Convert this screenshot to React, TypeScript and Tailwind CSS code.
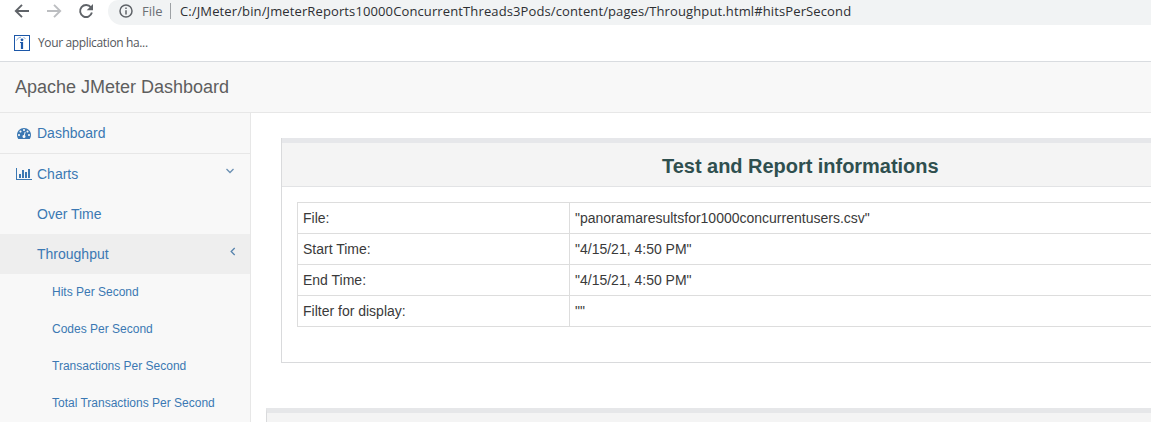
import React from "react";

const blue = "text-[#3b78b3]";

function Tachometer() {
  return (
    <svg className="h-[14px] w-[14px] shrink-0" viewBox="0 0 1792 1792" fill="currentColor">
      <path d="M384 1152q0-53-37.5-90.5t-90.5-37.5-90.5 37.5-37.5 90.5 37.5 90.5 90.5 37.5 90.5-37.5 37.5-90.5zm192-448q0-53-37.5-90.5t-90.5-37.5-90.5 37.5-37.5 90.5 37.5 90.5 90.5 37.5 90.5-37.5 37.5-90.5zm428 481l101-382q6-26-7.5-48.5t-38.5-29.5-48 6.5-30 39.5l-101 382q-60 5-107 43.5t-63 98.5q-20 77 20 146t117 89 146-20 89-117q16-60-6-117t-72-91zm660-33q0-53-37.5-90.5t-90.5-37.5-90.5 37.5-37.5 90.5 37.5 90.5 90.5 37.5 90.5-37.5 37.5-90.5zm-640-640q0-53-37.5-90.5t-90.5-37.5-90.5 37.5-37.5 90.5 37.5 90.5 90.5 37.5 90.5-37.5 37.5-90.5zm448 192q0-53-37.5-90.5t-90.5-37.5-90.5 37.5-37.5 90.5 37.5 90.5 90.5 37.5 90.5-37.5 37.5-90.5zm320 448q0 261-141 483-19 29-54 29h-1402q-35 0-54-29-141-221-141-483 0-182 71-348t191-286 286-191 348-71 348 71 286 191 191 286 71 348z" />
    </svg>
  );
}

function BarChart() {
  return (
    <svg className="h-[14px] w-[16px] shrink-0" viewBox="0 0 2048 1792" fill="currentColor">
      <path d="M640 896v512h-256v-512h256zm384-512v1024h-256v-1024h256zm1024 1152v128h-2048v-1536h128v1408h1920zm-640-896v768h-256v-768h256zm384-384v1152h-256v-1152h256z" />
    </svg>
  );
}

function BrowserBar() {
  return (
    <div className="h-[62px] shrink-0 border-b border-[#d9dce0] bg-white font-['Open_Sans',sans-serif]">
      <div className="flex h-[25px]">
        <svg className="h-[25px] w-[108px] shrink-0" viewBox="0 0 108 25" fill="none" strokeWidth="1.9">
          <path d="M29 11H16.5M22 4.8L15.8 11L22 17.2" stroke="#5f6368" />
          <path d="M47 11h12.5M54 4.8L60.2 11L54 17.2" stroke="#bcbec1" />
          <path d="M90.9 7.4A6 6 0 1 0 91.9 12.6" stroke="#5f6368" />
          <path d="M93 4v6.2h-6.3z" fill="#5f6368" />
        </svg>
        <div className="flex h-[25px] flex-1 items-start overflow-hidden rounded-bl-[14px] rounded-tl-[10px] bg-[#f1f3f4] pl-[11px]">
          <svg className="mt-[4px] h-[14px] w-[14px] shrink-0" viewBox="0 0 14 14" fill="none" stroke="#5f6368" strokeWidth="1.5">
            <circle cx="7" cy="7" r="6" />
            <path d="M7 6.2v4.2M7 3.5v1.5" />
          </svg>
          <span className="ml-[9px] w-[21px] whitespace-nowrap text-[13px] leading-[22px] text-[#6b6f74]">File</span>
          <span className="ml-[7px] mt-[3px] h-[16px] w-px bg-[#9da1a5]" />
          <span className="ml-[9px] whitespace-nowrap text-[13px] leading-[22px] tracking-[0.12px] text-[#2d2f33]">
            C:/JMeter/bin/JmeterReports10000ConcurrentThreads3Pods/content/pages/Throughput.html#hitsPerSecond
          </span>
        </div>
      </div>
      <div className="flex h-[36px] items-center pl-[14px]">
        <svg className="h-4 w-4 shrink-0" viewBox="0 0 16 16" fill="none" stroke="#1c57a8">
          <rect x="0.5" y="0.5" width="15" height="15" fill="#fff" />
          <path d="M2.5 5.5Q4 2 7 2.2M9.5 2.5l2 1" stroke="#8fb0dc" />
          <path d="M6 7.5h2v6" strokeWidth="1" />
          <path d="M8 7v7" strokeWidth="2.2" />
          <circle cx="8" cy="4.8" r="1.4" fill="#1c57a8" stroke="none" />
        </svg>
        <span className="ml-2 whitespace-nowrap text-[12px] leading-4 tracking-[-0.36px] text-[#54575c]">Your application ha...</span>
      </div>
    </div>
  );
}

function Sidebar() {
  return (
    <nav className={`w-[251px] shrink-0 border-r border-[#e7e7e7] bg-[#f8f8f8] text-[14px] leading-5 ${blue}`}>
      <div className="flex h-[41px] items-center border-b border-[#e7e7e7] pl-[17px]">
        <Tachometer />
        <span className="ml-[6px]">Dashboard</span>
      </div>
      <div className="flex h-10 items-center pl-4 pr-[15px]">
        <BarChart />
        <span className="ml-[5px] flex-1">Charts</span>
        <svg className="mb-[6px] h-[10px] w-[10px]" viewBox="0 0 10 10" fill="none" stroke="#6b90b3" strokeWidth="1.3"><path d="M1.5 3L5 6.5 8.5 3" /></svg>
      </div>
      <div className="flex h-10 items-center pl-[37px]">Over Time</div>
      <div className="flex h-10 items-center bg-[#eee] pl-[37px] pr-3">
        <span className="flex-1">Throughput</span>
        <svg className="mb-[6px] h-[10px] w-[10px]" viewBox="0 0 10 10" fill="none" stroke="#5683ad" strokeWidth="1.3"><path d="M6.7 2L3.2 5.5l3.5 3.5" /></svg>
      </div>
      {["Hits Per Second", "Codes Per Second", "Transactions Per Second", "Total Transactions Per Second"].map((t) => (
        <div key={t} className="flex h-[37px] items-center whitespace-nowrap pb-[2px] pl-[52px] text-[12px]">{t}</div>
      ))}
    </nav>
  );
}

const rows = [
  ["File:", '"panoramaresultsfor10000concurrentusers.csv"'],
  ["Start Time:", '"4/15/21, 4:50 PM"'],
  ["End Time:", '"4/15/21, 4:50 PM"'],
  ["Filter for display:", '""'],
];

export default function App() {
  return (
    <div className="flex h-[422px] w-[1151px] flex-col overflow-hidden bg-white font-['Liberation_Sans',Arial,sans-serif]">
      <BrowserBar />
      <header className="flex h-[51px] shrink-0 items-center border-b border-[#e7e7e7] bg-[#f8f8f8] pl-[15px] text-[18px] leading-5 text-[#5e5e5e]">
        Apache JMeter Dashboard
      </header>
      <div className="flex min-h-0 flex-1">
        <Sidebar />
        <main className="min-w-0 flex-1 pt-[25px]">
          <section className="ml-[30px] h-[225px] border-b border-l border-[#d9dadc]">
            <div className="h-[49px] border-b border-t-[5px] border-b-[#e2e3e5] border-t-[#e6e7ea] bg-[#f4f4f4]">
              <h2 className="ml-[380px] whitespace-nowrap pt-[10px] text-[20px] font-bold leading-[26px] tracking-[-0.03px] text-[#2f4f4f]">Test and Report informations</h2>
            </div>
            <table className="ml-[15px] mt-[15px] w-[900px] table-fixed border-collapse text-[14px] leading-5 text-[#3a3a3a]">
              <colgroup>
                <col className="w-[272px]" />
                <col />
              </colgroup>
              <tbody>
                {rows.map(([k, v]) => (
                  <tr key={k} className="h-[31px]">
                    <td className="border border-[#ddd] px-[5px] py-0">{k}</td>
                    <td className="border border-[#ddd] px-[5px] py-0">{v}</td>
                  </tr>
                ))}
              </tbody>
            </table>
          </section>
          <section className="ml-[15px] mt-[45px] h-[60px] border-l border-t-[5px] border-l-[#d9dadc] border-t-[#e6e7e9] bg-[#f4f4f4]" />
        </main>
      </div>
    </div>
  );
}
